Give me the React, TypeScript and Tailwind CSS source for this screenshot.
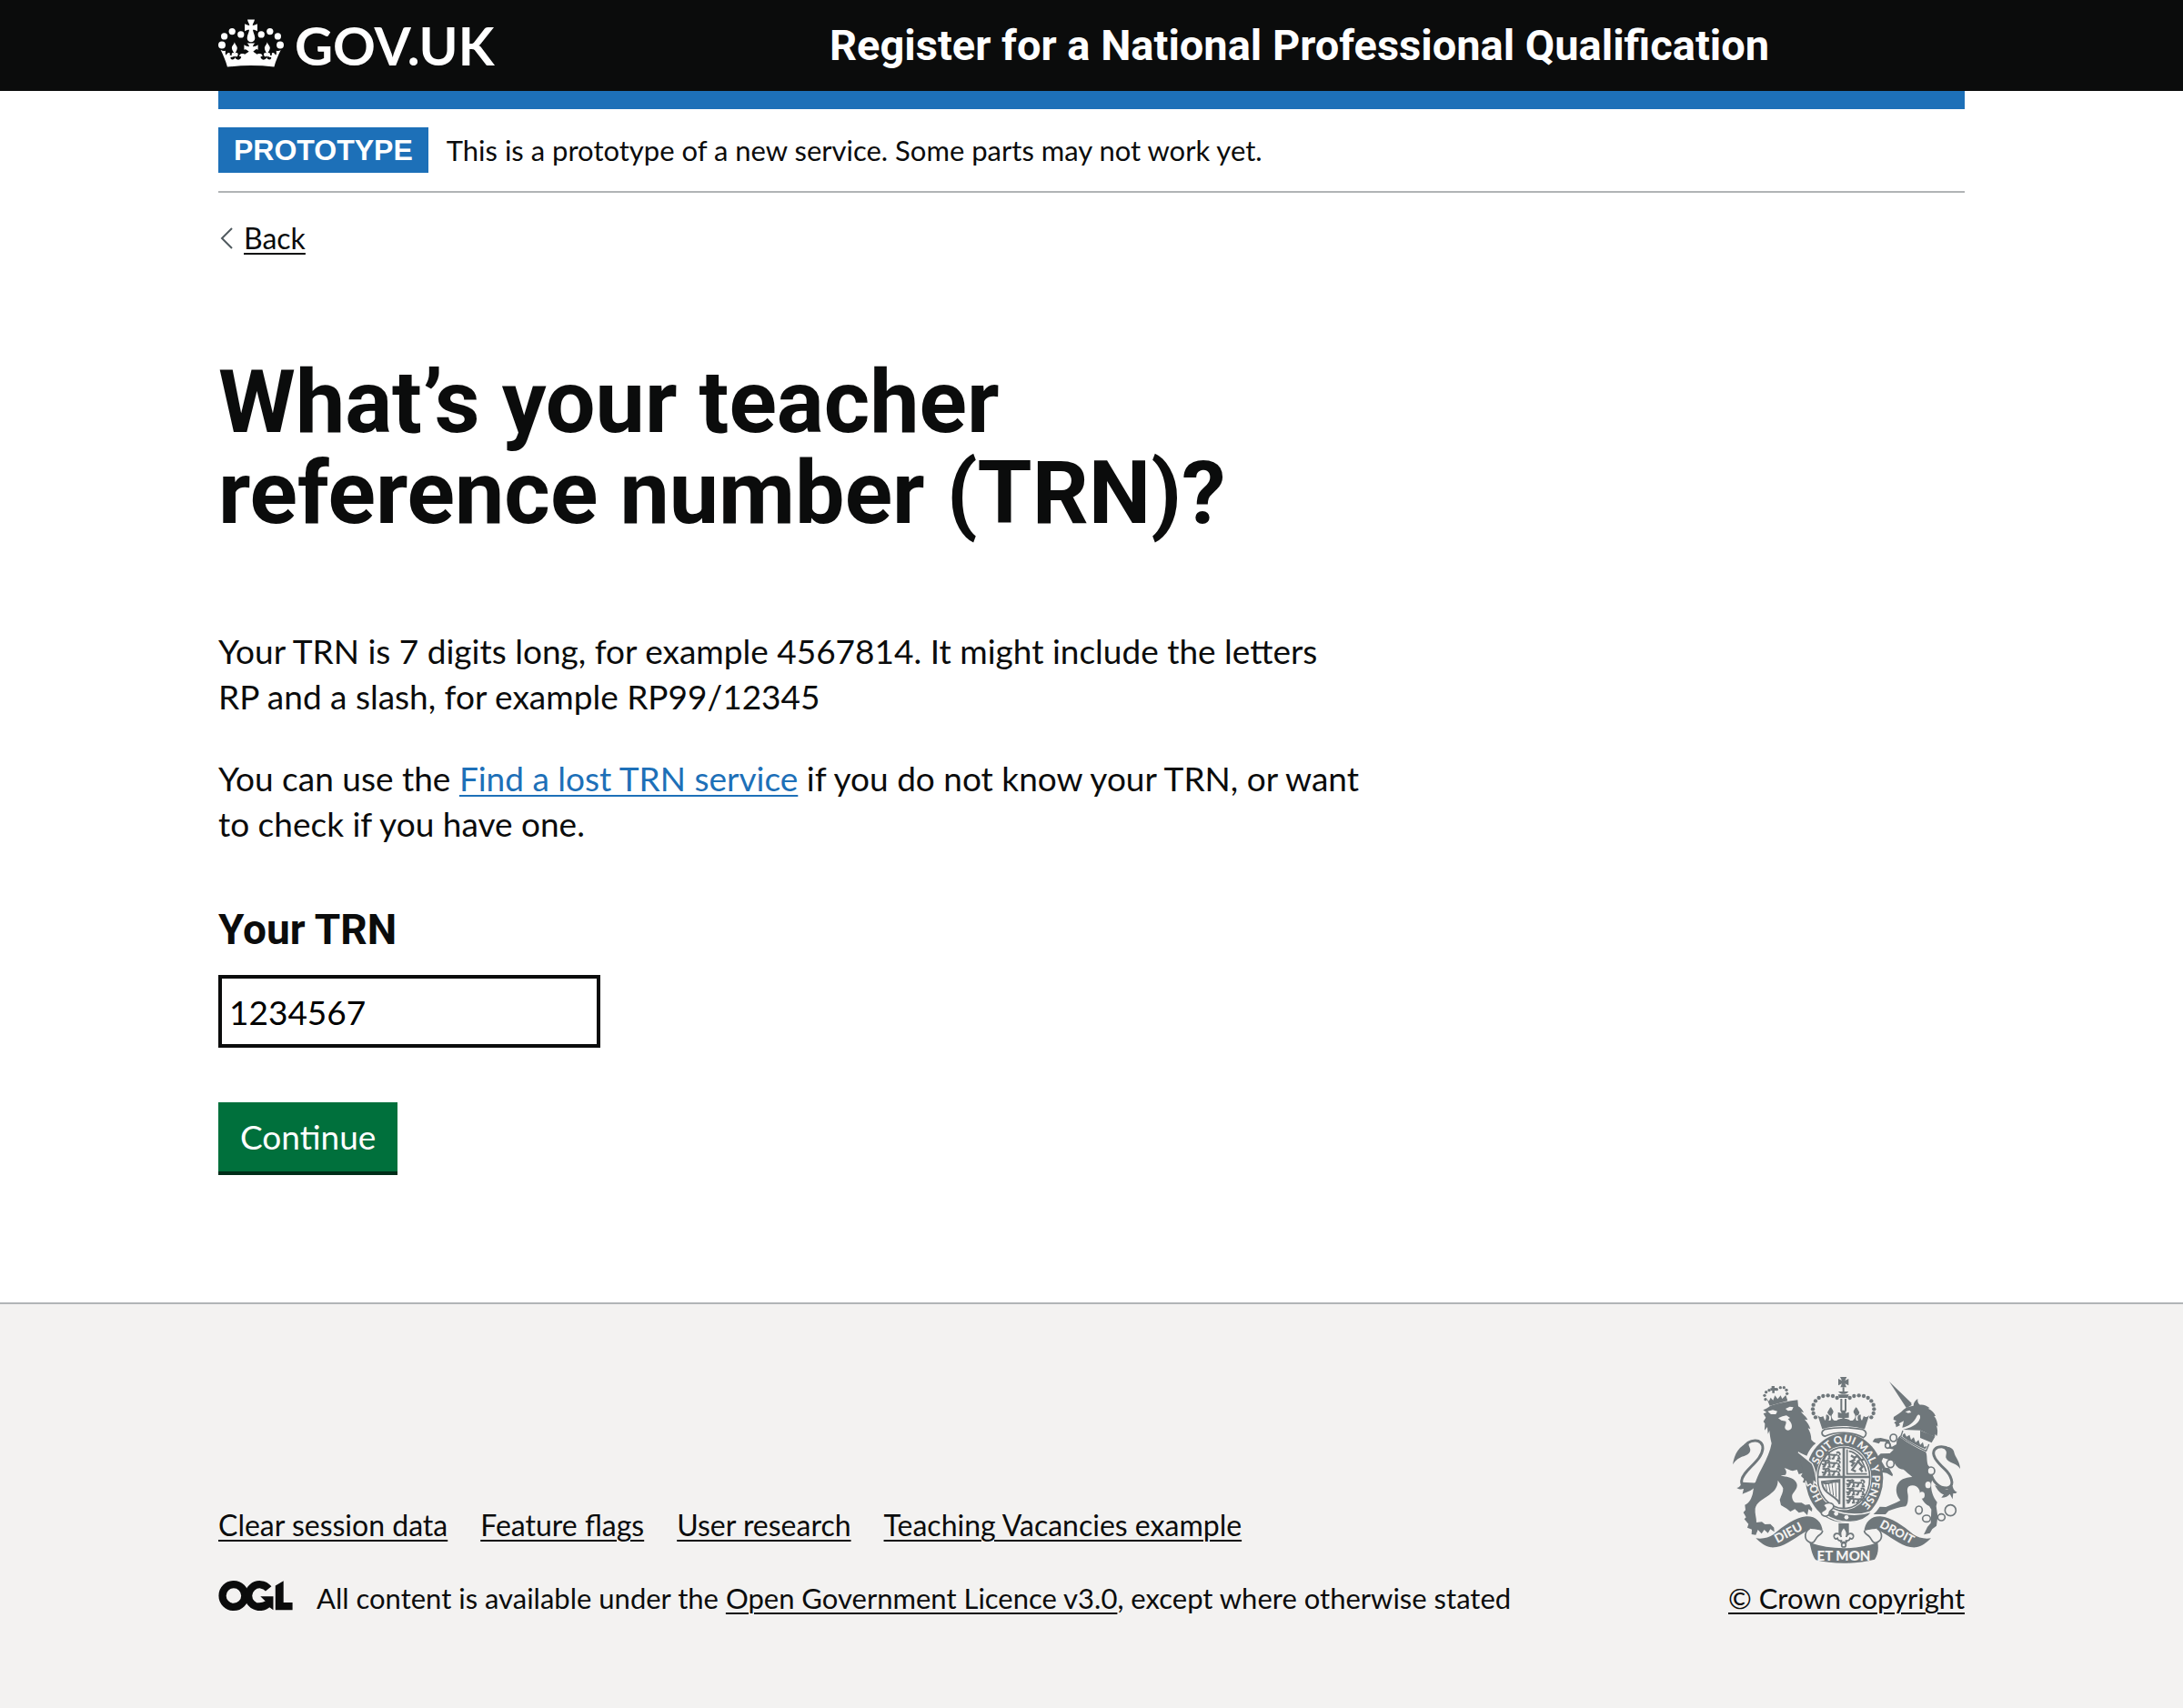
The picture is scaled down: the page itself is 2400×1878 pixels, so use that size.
import type { ReactNode } from "react";

function FooterLink({ children }: { children: ReactNode }) {
  return (
    <a href="#" className="text-[#0b0c0c] underline decoration-2 underline-offset-4">
      {children}
    </a>
  );
}

function HeaderCrown() {
  const beads = [
    [71, 148, 12],
    [79, 119, 11],
    [105, 103, 11],
    [134, 113, 11],
    [202, 113, 11],
    [231, 103, 11],
    [257, 119, 11],
    [265, 148, 12],
  ];
  return (
    <svg viewBox="59 62 218 160" className="h-[53px] w-[72px]" fill="currentColor" aria-hidden="true">
      {beads.map(([cx, cy, r]) => (
        <circle key={cx} cx={cx} cy={cy} r={r} />
      ))}
      <path d="M156 63h24c-1 7-6 12-7 20 6 0 12-3 16-5v24c-4-3-9-5-15-5 1 9 7 18 7 28a13 13 0 0 1-26 0c0-10 6-19 7-28-6 0-11 2-15 5V78c4 2 10 5 16 5-1-8-6-13-7-20z" />
      <path d="M68 165c5 3 9 4 15 2 0 6-2 9 2 15 3-5 5-8 9-8 4 0 5 4 3 8 5-1 9 1 10 7-6-2-8 0-7 4 4 7 15 4 15-8-4 1-7 3-10 1-3-4-2-11 2-12 2-1 4 0 5 2-3-6-8-12-8-18 0-9 8-12 9-20 2 9 9 12 9 20 0 6-4 12-7 18 1-2 3-3 6-2 4 1 5 9 1 12-3 2-6 0-9-2 1 14 17 18 22 6 1-4-1-5-6-4 0-7 6-11 11-9 2-1 5 0 7 2l14-9-8-6c-5-3-7-2-8 1v-18c4 4 12 6 17 6-1-5-4-9-8-11h28c-4 2-7 6-8 11 6 0 13-2 17-6v18c-3-4-5-4-9-1l-7 6 13 9c2-2 5-3 7-2 5-2 11 2 11 9-5-1-7 0-6 4 5 12 21 8 22-6-3 2-6 4-9 2-4-3-3-11 1-12 3-1 5 0 6 2-3-6-7-12-7-18 0-8 7-11 9-20 1 8 9 11 9 20 0 6-5 12-8 18 1-2 3-3 5-2 4 1 5 8 2 12-3 2-6 0-10-1 0 12 11 15 15 8 1-4-1-6-7-4 1-6 5-8 10-7-2-4-1-8 3-8 4 0 6 3 9 8 4-6 2-9 2-15 6 2 10 1 15-2-9 18-17 37-22 56-52-6-104-6-156 0-5-19-13-38-22-56z" />
    </svg>
  );
}

function OglLogo() {
  return (
    <svg
      viewBox="60 55 246 100"
      className="mt-px h-[33px] w-[82px] shrink-0"
      role="img"
      aria-label="Open Government Licence"
    >
      <g fill="none" stroke="#0b0c0c">
        <circle cx="110" cy="105" r="37.5" strokeWidth="25" />
        <path d="M226 82A37.500 37.500 0 1 0 224 131" strokeWidth="25" />
      </g>
      <path d="M199 107h43v46l-15-11-28 8-10-20 28-5zM249 72l27-16v72h30v25h-57z" fill="#0b0c0c" />
    </svg>
  );
}

const ARCH_BEADS = [
  [345, 204],
  [338, 191],
  [336, 177],
  [338, 163],
  [345, 150],
  [356, 140],
  [370, 134],
  [386, 132],
  [402, 134],
  [416, 140],
];

const LION_CROWN_BEADS = [
  [180, 145],
  [177, 132],
  [182, 121],
  [192, 115],
  [217, 112],
  [229, 106],
  [241, 106],
  [249, 114],
  [251, 126],
];

function Scroll() {
  return (
    <>
      <path
        d="M148 603C170 606 190 602 207 590C240 562 278 535 315 531C345 530 366 548 369 583C350 568 325 572 304 586C270 606 236 636 198 633C178 630 163 617 148 603Z"
        fill="#6f777b"
      />
      <path
        d="M326 571C304 586 308 612 330 618C342 621 343 606 352 597C358 590 368 590 368 578"
        fill="#f3f2f1"
        stroke="#6f777b"
        strokeWidth="5"
      />
    </>
  );
}

function ThreeLions({ x, y }: { x: number; y: number }) {
  return (
    <g transform={`translate(${x} ${y})`} fill="none" stroke="#6f777b" strokeWidth="6">
      {[0, 27, 54].map((dy) => (
        <g key={dy} transform={`translate(0 ${dy})`}>
          <path d="M4 3c8-6 12 3 8 9-4 4-8 2-8-2M12 9c14-5 26 4 42-1M50 2c8-4 14 2 10 8M16 10l-6 11h-6M26 11l2 10h-7M44 10l-4 11h-6M56 10l4 11h-7M12 3l10-3 6 4" />
        </g>
      ))}
    </g>
  );
}

function RoyalArms() {
  return (
    <svg viewBox="72 71 750 615" className="h-[205px] w-[250px]" aria-hidden="true">
      <g fill="#6f777b">
        {/* lion */}
        <path d="M196 166C225 158 258 150 286 147L288 168C297 173 302 180 306 188L297 186C304 196 316 203 319 213L309 211C318 221 325 231 328 243L320 240C327 252 331 264 331 278C336 284 341 288 346 290C334 299 323 314 316 331L286 318L338 360C346 380 349 402 350 423L342 417L343 431L329 424L322 433L312 420L303 419L307 407L297 398L302 388L290 392L284 377L270 381C260 380 252 372 242 372C250 380 250 388 246 394L230 396C248 402 270 400 281 418C291 434 275 447 268 460C266 470 271 482 279 486L299 486L311 493L325 491L334 505L333 515L322 507L318 527L306 515L290 519L277 507L262 515L250 505L231 494L227 476C232 462 239 451 238 438C234 427 225 420 221 412C220 440 205 450 188 463C170 475 150 485 146 505C144 522 151 536 150 551L168 549L178 557L196 556L208 568L209 582L196 573L188 586L176 575L167 588L155 575L148 592L134 590L135 574L120 568L124 556L110 540L116 534L107 518L114 510L112 493C128 487 134 470 138 455C142 425 155 395 171 366C184 340 196 315 200 290C196 275 194 260 193 248L188 259L186 236L177 247L178 225L173 218L181 205L173 192L184 188L172 180C180 177 188 173 196 166Z" />
        <path d="M72 360C78 325 92 296 128 287C117 296 136 306 128 319C117 337 94 326 72 360Z" />
        <path d="M106 307C124 274 172 271 171 307C168 350 105 378 101 414C99 445 142 440 162 407" fill="none" stroke="#6f777b" strokeWidth="9" />
        <path d="M102 418C98 431 93 435 85 437C95 443 101 442 108 440L104 457C120 449 139 446 158 421Z" />
        {/* lion's crown */}
        <path d="M184 142L191 151L197 139L205 148L211 132L220 144L230 132L235 143L247 131L253 150L194 166Z" />
        {LION_CROWN_BEADS.map(([cx, cy]) => (
          <circle key={cx + "-" + cy} cx={cx} cy={cy} r="5" />
        ))}
        <path d="M200 101h10v6h5v9h-5v8h-8v-8h-6v-8h4z" />
        {/* imperial crown */}
        {ARCH_BEADS.map(([cx, cy]) => (
          <g key={cx + "-" + cy}>
            <circle cx={cx} cy={cy} r="6.500" />
            <circle cx={874 - cx} cy={cy} r="6.500" />
          </g>
        ))}
        <path d="M426 71h22l-6 12 12-6v22l-12-6 5 12h-20l5-12-12 6V77l12 6z" />
        <path d="M434 105h6v14h14a17 17 0 0 1-12 8h-10a17 17 0 0 1-12-8h14zM419 129h36l-4 11h-28zM427 143h6v40h-6zM441 143h6v40h-6z" />
        <path d="M352 197C359 205 365 204 370 200L376 215C384 204 377 201 381 195C390 197 393 205 388 215L394 215C400 205 393 192 385 191C391 186 393 179 393 173L396 170C401 180 407 184 402 191C395 198 397 209 407 215L415 215C421 208 429 211 435 207L419 205V187L431 191L427 181H447L443 191L455 187V205L439 207C446 211 453 208 459 215L467 215C477 209 479 198 472 191C467 184 473 180 478 170L482 178C482 184 484 188 489 191C481 192 474 205 480 215L486 215C481 205 484 197 493 195C497 201 490 204 498 215L504 200C509 204 515 205 522 197L507 243C460 230 414 230 367 243Z" />
        <path d="M393 172l-9 16 6 10h8l4-10zM481 172l-9 16 6 10h8l4-10z" />
        {/* unicorn */}
        <path d="M588 86L660 156L662 164L645 174Z" />
        <path d="M636 178C646 170 657 167 668 166C668 156 674 148 682 143C681 152 683 159 690 163C702 162 712 166 722 174L716 175C728 180 737 189 741 200L736 200C744 210 748 222 748 235L743 230C748 242 749 255 745 266L739 260L739 268C722 263 708 253 691 247L633 245C655 240 683 230 690 207C692 196 684 190 679 201C670 222 650 236 631 238L636 216L620 225L624 230L611 237L609 226L604 222L612 216L602 212L603 203C614 196 624 190 636 178Z" />
        <path d="M626 263C650 283 678 300 708 317C715 330 710 345 716 362C732 376 735 400 727 420C724 445 733 468 746 484L743 497L748 531L744 562L730 573L722 586L702 591L714 566L725 553L727 508L720 497C700 488 690 465 688 445C682 430 665 425 653 432C642 442 652 457 650 470C650 484 648 493 642 498C622 500 602 507 586 513L576 524H536L546 514L557 499L577 500L612 485L625 478C613 464 608 446 614 428C622 410 640 402 664 401C654 392 643 383 635 376C620 376 608 364 604 350L578 341L568 338L563 349L575 370L588 372L600 393L598 399L580 388L562 385L567 376L549 350L548 335L560 324L590 323L603 310L580 306L576 285L559 284L554 291L533 285L540 274L560 272L588 279L596 302L612 293C611 280 617 271 626 263Z" />
        <path d="M690 247C712 256 730 263 739 268L728 288L690 272Z" />
        <path d="M725 386C730 418 756 440 780 437C810 430 788 391 772 376C745 350 725 328 738 310C750 297 780 299 793 316" fill="none" stroke="#6f777b" strokeWidth="9" />
        <path d="M762 304C784 296 801 306 803 323C808 339 821 350 822 374C810 352 783 357 775 337C774 324 785 315 762 304Z" />
        <path d="M738 428C748 445 756 455 768 459L760 469C773 469 783 464 788 457L797 474L799 455C805 455 808 455 812 451C800 445 799 438 797 430L779 443Z" />
        {/* garter */}
        <ellipse cx="440" cy="404" rx="128" ry="147" />
      </g>
      <g fill="#f3f2f1">
        <path d="M187 184L204 180L219 184L214 194L198 194ZM246 176L260 169L272 171L267 181L254 183Z" />
        <path d="M222 207L236 201L249 198L261 206L254 210C262 218 270 228 266 240C260 250 247 249 244 239C243 231 250 226 247 217L232 214Z" />
        <path d="M641 186L655 181L661 188L650 190Z" />
        <path d="M631 246C658 268 688 284 722 292L711 319C680 306 650 290 624 270Z" />
        <path
          d="M375 244C410 237 460 237 500 244C515 250 515 263 503 271C465 250 412 250 376 267C363 262 363 250 375 244Z"
          stroke="#6f777b"
          strokeWidth="5"
        />
        <ellipse cx="716" cy="427" rx="9" ry="11" />
        <ellipse cx="696" cy="461" rx="9" ry="11" />
        <ellipse cx="438" cy="404" rx="91" ry="106" />
      </g>
      {/* unicorn's collar */}
      <path d="M633 248L626 268C652 287 682 302 710 315L719 293" fill="none" stroke="#6f777b" strokeWidth="4" />
      <path d="M632 262L639 256L645 268L655 262L660 278L669 270L675 287L685 279L690 295L699 286L703 302L713 299L707 309C680 298 654 285 632 268Z" fill="#6f777b" />
      {/* shield */}
      <ellipse cx="438" cy="404" rx="86" ry="101" fill="none" stroke="#6f777b" strokeWidth="5" />
      <path d="M438 303V505M352 401H524" stroke="#6f777b" strokeWidth="8" />
      <ThreeLions x={364} y={319} />
      <ThreeLions x={444} y={411} />
      <path d="M449 310V391H515M455 316C475 318 500 338 512 384" fill="none" stroke="#6f777b" strokeWidth="5" />
      <path d="M462 330l12 8 9-7 10 12-8 6 15 18-8 8 8 9M476 343l-14 7 10 5-9 11M484 352l-18 25 12 6M497 346l8-5" fill="none" stroke="#6f777b" strokeWidth="7" />
      <path d="M366 417L424 411V490C418 462 370 462 366 417Z" fill="none" stroke="#6f777b" strokeWidth="6" />
      <path d="M377 420L383 446M388 421L394 456M399 420L404 462M411 418L413 468" stroke="#6f777b" strokeWidth="3" />
      <path d="M368 418C385 432 405 408 423 418" fill="none" stroke="#6f777b" strokeWidth="6" />
      {/* garter motto */}
      <path id="garter-motto" d="M440 520A102 117 0 0 1 440 287A102 117 0 0 1 440 520" fill="none" />
      <text fill="#f3f2f1" fontFamily="Lato, sans-serif" fontWeight="900" fontSize="35">
        <textPath href="#garter-motto" startOffset="87">HO</textPath>
        <textPath href="#garter-motto" startOffset="206">SOIT QUI MAL Y PENSE</textPath>
      </text>
      {/* lion's paw and the buckle */}
      <path d="M288 319L334 357C345 380 348 402 349 425L340 416L338 433L328 424L319 430L312 414" fill="#6f777b" stroke="#f3f2f1" strokeWidth="4" />
      <path d="M382 499C430 526 480 532 534 514C500 560 425 560 372 522Z" fill="#6f777b" stroke="#f3f2f1" strokeWidth="5" />
      <path d="M370 494C382 482 404 484 405 499C402 510 392 510 391 517C392 528 378 536 366 525C358 514 374 512 378 507C379 502 376 500 370 494Z" fill="#f3f2f1" stroke="#6f777b" strokeWidth="5" />
      <circle cx="413" cy="522" r="7" fill="#f3f2f1" />
      <circle cx="447" cy="534" r="7" fill="#f3f2f1" />
      {/* chain */}
      <g fill="none" stroke="#6f777b" strokeWidth="5">
        <ellipse cx="602" cy="272" rx="11" ry="12" fill="#f3f2f1" />
        <ellipse cx="583" cy="297" rx="8" ry="9" fill="#f3f2f1" />
        <ellipse cx="592" cy="357" rx="12" ry="13" fill="#f3f2f1" />
        <ellipse cx="726" cy="381" rx="12" ry="13" fill="#f3f2f1" />
        <ellipse cx="686" cy="510" rx="11" ry="13" />
        <ellipse cx="711" cy="538" rx="13" ry="11" />
        <ellipse cx="760" cy="534" rx="12" ry="11" />
        <circle cx="790" cy="511" r="18" />
      </g>
      {/* scroll */}
      <Scroll />
      <g transform="translate(874 0) scale(-1 1)">
        <Scroll />
      </g>
      <path d="M325 617C395 642 480 642 550 617C554 640 550 660 540 673C480 689 400 689 346 675C334 660 331 640 325 617Z" fill="#6f777b" />
      <g fill="#f3f2f1" fontFamily="Lato, sans-serif" fontWeight="900" textAnchor="middle">
        <text transform="translate(262 597) rotate(-28)" fontSize="41">
          DIEU
        </text>
        <text transform="translate(608 594) rotate(28)" fontSize="39">
          DROIT
        </text>
        <text x="438" y="676" fontSize="45">
          ET MON
        </text>
      </g>
      {/* fleur-de-lis */}
      <path d="M421 554h34v34h-34z" fill="#6f777b" />
      <path
        d="M438 566C430 577 424 584 430 599C422 581 405 586 406 598C407 605 413 607 417 603C419 610 425 612 430 611L429 616H447L446 611C451 612 457 610 459 603C463 607 469 605 470 598C471 586 454 581 446 599C452 584 446 577 438 566Z"
        fill="#f3f2f1"
        stroke="#6f777b"
        strokeWidth="5"
      />
      <circle cx="438" cy="625" r="7" fill="#f3f2f1" stroke="#6f777b" strokeWidth="5" />
    </svg>
  );
}

export default function App() {
  return (
    <div className="flex min-h-screen flex-col bg-white font-['Lato',sans-serif] text-[#0b0c0c]">
      <header className="bg-[#0b0c0c] text-white">
        <div className="mx-auto flex h-[100px] max-w-[1920px] items-center">
          <div className="w-[35%]">
            <a href="#" className="flex w-fit items-start gap-3 text-[58px] leading-[100px] font-bold">
              <span className="pt-[21px]">
                <HeaderCrown />
              </span>
              <span>GOV.UK</span>
            </a>
          </div>
          <a href="#" className="font-['Roboto',sans-serif] text-[47px] leading-[100px] font-bold">
            Register for a National Professional Qualification
          </a>
        </div>
      </header>

      <div className="mx-auto w-full max-w-[1920px]">
        <div className="h-5 bg-[#1d70b8]" />
        <div className="flex items-center gap-5 border-b-2 border-[#b1b4b6] py-5">
          <strong className="bg-[#1d70b8] px-[17px] font-['Liberation_Sans',sans-serif] text-[32px] leading-[50px] font-bold text-white">
            PROTOTYPE
          </strong>
          <span className="text-[31px] leading-[50px]">
            This is a prototype of a new service. Some parts may not work yet.
          </span>
        </div>

        <a href="#" className="mt-[30px] flex w-fit items-center gap-3 text-[32px] leading-10">
          <svg viewBox="0 0 16 24" className="h-6 w-4" fill="none" stroke="#505a5f" strokeWidth="2" aria-hidden="true">
            <path d="M15 1L4 12L15 23" />
          </svg>
          <span className="underline decoration-2 underline-offset-4">Back</span>
        </a>

        <main className="w-2/3 pt-[110px] pr-5 pb-[140px]">
          <h1 className="font-['Roboto',sans-serif] text-[97px] leading-[100px] font-bold">
            What’s your teacher reference number (TRN)?
          </h1>
          <div className="mt-[99px] flex flex-col gap-10 text-[37px] leading-[50px]">
            <p>
              Your TRN is 7 digits long, for example 4567814. It might include the letters RP and a slash, for
              example RP99/12345
            </p>
            <p>
              You can use the{" "}
              <a href="#" className="text-[#1d70b8] underline decoration-2 underline-offset-4">
                Find a lost TRN service
              </a>{" "}
              if you do not know your TRN, or want to check if you have one.
            </p>
          </div>
          <form className="mt-[66px] flex flex-col items-start" onSubmit={(event) => event.preventDefault()}>
            <label htmlFor="trn" className="mb-[25px] font-['Roboto',sans-serif] text-[46px] leading-[50px] font-bold">
              Your TRN
            </label>
            <input
              id="trn"
              name="trn"
              type="text"
              defaultValue="1234567"
              className="h-20 w-[420px] border-4 border-[#0b0c0c] px-2 text-[37px] leading-[50px] text-black"
            />
            <button
              type="submit"
              className="mt-[60px] h-20 border-b-4 border-[#002d18] bg-[#00703c] px-6 text-[37px] leading-[50px] text-white"
            >
              Continue
            </button>
          </form>
        </main>
      </div>

      <footer className="flex-1 border-t-2 border-[#b1b4b6] bg-[#f3f2f1] text-[31px] leading-10">
        <div className="mx-auto flex max-w-[1920px] items-end justify-between pt-20 pb-20">
          <div className="flex flex-col gap-10">
            <nav className="flex gap-9 text-[32px]" aria-label="Support links">
              <FooterLink>Clear session data</FooterLink>
              <FooterLink>Feature flags</FooterLink>
              <FooterLink>User research</FooterLink>
              <FooterLink>Teaching Vacancies example</FooterLink>
            </nav>
            <div className="flex items-start gap-[26px]">
              <OglLogo />
              <p>
                All content is available under the <FooterLink>Open Government Licence v3.0</FooterLink>, except
                where otherwise stated
              </p>
            </div>
          </div>
          <div className="flex flex-col items-center gap-[18px]">
            <RoyalArms />
            <FooterLink>© Crown copyright</FooterLink>
          </div>
        </div>
      </footer>
    </div>
  );
}
